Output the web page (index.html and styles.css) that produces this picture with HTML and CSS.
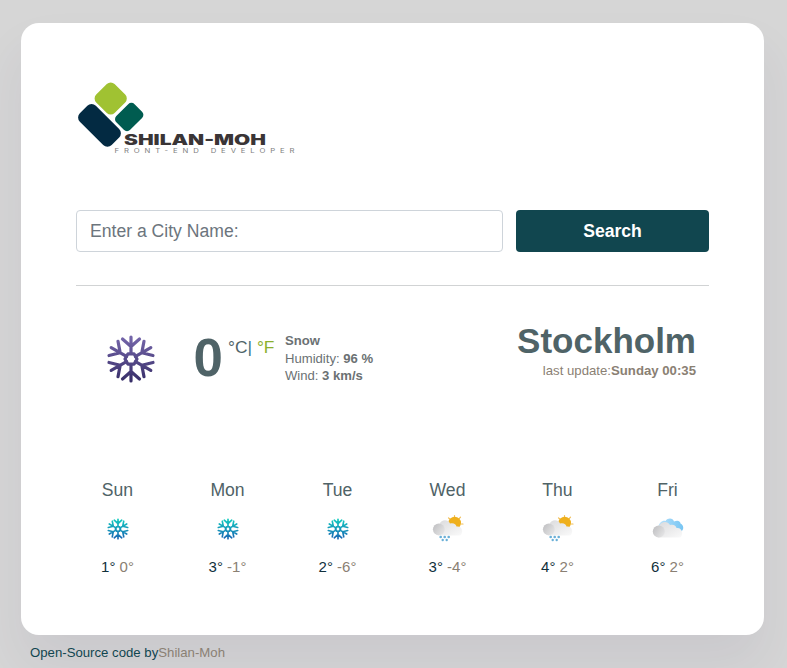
FILE: index.html
```html
<!DOCTYPE html>
<html lang="en">
<head>
<meta charset="utf-8">
<title>Weather</title>
<link rel="stylesheet" href="styles.css">
</head>
<body>
<svg width="0" height="0" class="defs" aria-hidden="true">
  <defs>
    <linearGradient id="violet" gradientUnits="userSpaceOnUse" x1="0" y1="-24" x2="0" y2="24"><stop offset="0" stop-color="#7768ad"/><stop offset="1" stop-color="#352c66"/></linearGradient>
    <linearGradient id="aqua" gradientUnits="userSpaceOnUse" x1="0" y1="-24" x2="0" y2="24"><stop offset="0" stop-color="#12cfc0"/><stop offset="1" stop-color="#1a63b4"/></linearGradient>
    <linearGradient id="cloud" x1="0" y1="0" x2="1" y2="1"><stop offset="0" stop-color="#d9d9db"/><stop offset="1" stop-color="#fafafa"/></linearGradient>
    <linearGradient id="puff" x1="0" y1="0" x2="1" y2="0.7"><stop offset="0" stop-color="#bdbdbf"/><stop offset="1" stop-color="#e4e4e5"/></linearGradient>
    <linearGradient id="blue" x1="0" y1="0" x2="1" y2="0"><stop offset="0" stop-color="#b9e2fb"/><stop offset="1" stop-color="#77c5f3"/></linearGradient>
    <symbol id="flake" viewBox="-25 -25 50 50">
      <g fill="none" stroke-linecap="round" stroke-linejoin="round">
        <path d="M-3-5.200H3L6 0 3 5.200H-3L-6 0Z"/>
        <path d="M0-5.500V-22M-8.500-20 0-12.500 8.500-20M0 5.500V22M-8.500 20 0 12.500 8.500 20"/>
        <path d="M4.500-2.600 19.800-11.400M13-17.700 10.800-6.200 22-3.500M-4.500-2.600-19.800-11.400M-13-17.700-10.800-6.200-22-3.500M4.500 2.600 19.800 11.400M13 17.700 10.800 6.200 22 3.500M-4.500 2.600-19.800 11.400M-13 17.700-10.800 6.200-22 3.500"/>
      </g>
    </symbol>
    <symbol id="showers" viewBox="0 0 32 30">
      <g stroke="#f0bd55" stroke-width="1.2" stroke-linecap="round"><path d="M22.500 1.500V4M16.500 3.800l1.200 1.200M28.500 3.200l-1.300 1.400M29.500 10h1.500"/></g>
      <circle cx="22.700" cy="9" r="6.300" fill="#efb01d"/>
      <path d="M6 21.500C3 20 2 17 4 14L7.500 10C9 5.500 16 4.500 18 9.500C22 8.500 24 10.500 24.500 12.500C30.500 11.500 32 19 28 21.500Z" fill="url(#cloud)"/>
      <circle cx="6.800" cy="15.300" r="5.900" fill="url(#puff)"/>
      <g fill="#69afd7"><circle cx="8.700" cy="23" r="1.300"/><circle cx="12.700" cy="23" r="1.300"/><circle cx="16.700" cy="23" r="1.300"/><circle cx="10.700" cy="26" r="1.200"/><circle cx="14.700" cy="26" r="1.200"/></g>
    </symbol>
    <symbol id="clouds" viewBox="0 0 32 30">
      <path d="M6 14C7 8 11 6 13.500 7C16 3.500 21 4 22 7.500C26 5.500 28.500 7.500 28.500 9.500C32 11 32 16 29.500 17L22 17Z" fill="url(#blue)"/>
      <path d="M6 23.500C3 22 2 18 5 14L8 10.500C10 7 16 7 18 11C22 10 24 12 24.500 14C30.500 13 32 21 28 23.500Z" fill="url(#cloud)"/>
      <circle cx="6.800" cy="17.500" r="6" fill="url(#puff)"/>
    </symbol>
  </defs>
</svg>
<main class="card">
  <svg class="logo" width="240" height="132" viewBox="76 78 240 132">
    <rect x="-22.500" y="-11.300" width="45" height="22.600" rx="6" transform="translate(99.500 125.400) rotate(45)" fill="#032a42"/>
    <rect x="-13" y="-13" width="26" height="26" rx="5.500" transform="translate(110.700 98.500) rotate(45)" fill="#a0c232"/>
    <rect x="-12.900" y="-9.800" width="25.800" height="19.600" rx="4.500" transform="translate(129.200 117) rotate(-45)" fill="#005c50"/>
    <text class="brand" x="124" y="144.800" textLength="142" lengthAdjust="spacingAndGlyphs">SHILAN-MOH</text>
    <text class="tagline" transform="translate(114.500 153) scale(1.250 1)" textLength="144">FRONT-END DEVELOPER</text>
  </svg>
  <form class="search">
    <input class="field" type="text" placeholder="Enter a City Name:" aria-label="City">
    <button class="submit" type="button">Search</button>
  </form>
  <section class="current">
    <svg class="now-icon" width="50" height="50" stroke="url(#violet)"><use href="#flake"/></svg>
    <div class="degrees">0</div>
    <div class="units">°C<span>|</span> <a>°F</a></div>
    <div class="details"><b>Snow</b><br>Humidity: <b>96 %</b><br>Wind: <b>3 km/s</b></div>
    <div class="place">
      <h1>Stockholm</h1>
      <p>last update:<b>Sunday 00:35</b></p>
    </div>
  </section>
  <section class="forecast">
    <div class="day"><span>Sun</span><svg class="snow" stroke="url(#aqua)"><use href="#flake"/></svg><p>1° <i>0°</i></p></div>
    <div class="day"><span>Mon</span><svg class="snow" stroke="url(#aqua)"><use href="#flake"/></svg><p>3° <i>-1°</i></p></div>
    <div class="day"><span>Tue</span><svg class="snow" stroke="url(#aqua)"><use href="#flake"/></svg><p>2° <i>-6°</i></p></div>
    <div class="day"><span>Wed</span><svg class="sky"><use href="#showers"/></svg><p>3° <i>-4°</i></p></div>
    <div class="day"><span>Thu</span><svg class="sky"><use href="#showers"/></svg><p>4° <i>2°</i></p></div>
    <div class="day"><span>Fri</span><svg class="sky"><use href="#clouds"/></svg><p>6° <i>2°</i></p></div>
  </section>
</main>
<footer>Open-Source code by<a>Shilan-Moh</a></footer>
</body>
</html>
```
FILE: styles.css
```css
* { box-sizing: border-box; }
body {
  margin: 0;
  padding: 23px 23px 0 21px;
  height: 668px;
  overflow: hidden;
  background: #d6d6d6;
  font-family: "Liberation Sans", Arial, sans-serif;
  color: #4f6367;
}
.defs { display: block; height: 0; }
.card {
  height: 612px;
  padding: 55px;
  border-radius: 18px;
  background: #fff;
  box-shadow: 0 30px 50px rgba(65, 50, 100, 0.08);
}
.logo { display: block; }
.brand { font: 900 14px Inter, sans-serif; fill: #3a3536; }
.tagline { font: 6.2px Inter, sans-serif; fill: #808080; }
.search {
  display: flex;
  gap: 13px;
  padding-bottom: 33px;
  border-bottom: 1px solid #d1d3d4;
}
.field {
  width: 427px;
  height: 42px;
  padding: 0 13px;
  border: 1px solid #ced4da;
  border-radius: 4px;
  font: 17.6px "Liberation Sans", Arial, sans-serif;
}
.field::placeholder { color: #6c757d; opacity: 1; }
.submit {
  width: 193px;
  height: 42px;
  padding: 0;
  border: 0;
  border-radius: 4px;
  background: #11464f;
  color: #fff;
  font: bold 17.6px "Liberation Sans", Arial, sans-serif;
}
.current {
  display: flex;
  align-items: flex-start;
  height: 189px;
  padding: 34px 13px 0 30px;
}
.now-icon { margin-top: 14px; stroke-width: 3.2px; }
.degrees {
  margin: 8px 0 0 37.500px;
  width: 31.500px;
  font-size: 52.800px;
  line-height: 60px;
  font-weight: bold;
}
.units { width: 56px; margin: 16px 0 0 3px; font-size: 17.4px; line-height: 22px; white-space: nowrap; }
.units span { color: #3c7485; }
.units a { color: #8bb02e; }
.details { margin: 12px 0 0 1px; font-size: 13.100px; line-height: 17.500px; color: #6b7173; white-space: nowrap; }
.place { flex: 1; text-align: right; }
.place h1 { margin: 0; font-size: 35px; line-height: 42px; }
.place p { margin: 0; font-size: 13.2px; line-height: 18px; color: #8a8073; }
.forecast {
  display: grid;
  grid-template-columns: repeat(6, 110px);
  margin: 0 -13.500px;
}
.day { display: flex; flex-direction: column; align-items: center; padding-top: 4px; }
.day span { font-size: 17.6px; line-height: 22px; }
.day svg { height: 30px; margin: 12.500px 0 13.500px; }
.snow { width: 22px; stroke-width: 3.8px; }
.sky { width: 32px; }
.day p { margin: 0; font-size: 15px; line-height: 20px; color: #11303c; }
.day i { font-style: normal; color: #8a8073; }
footer { padding: 9px 0 0 9px; font-size: 13.2px; line-height: 17px; color: #11464f; }
footer a { color: #8a8073; }
```
